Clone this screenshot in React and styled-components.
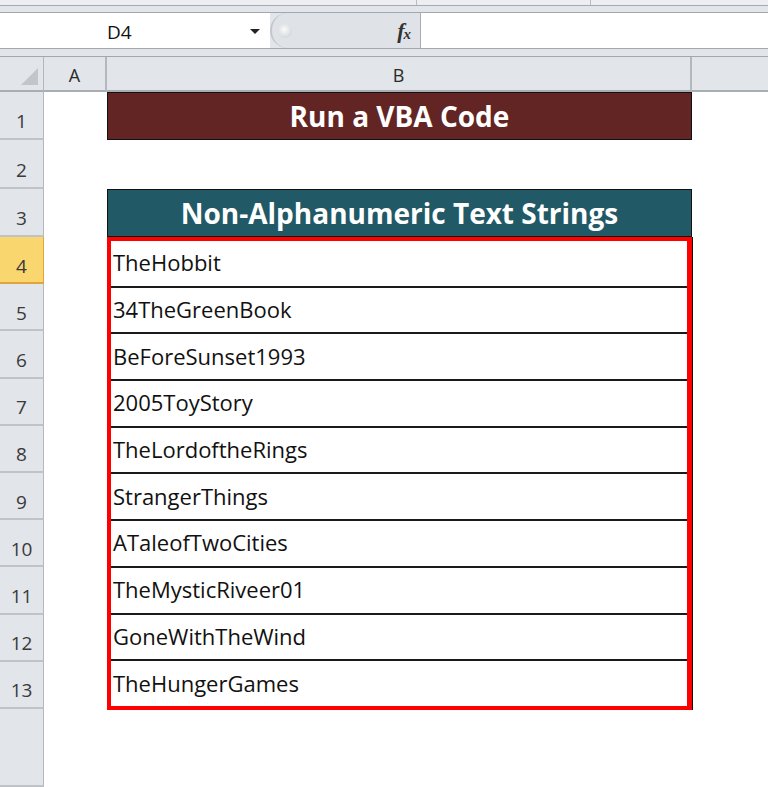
import React from 'react';
import styled, { createGlobalStyle } from 'styled-components';

const GlobalStyle = createGlobalStyle`
  html, body {
    margin: 0;
    padding: 0;
    background: #ffffff;
    overflow: hidden;
  }
  body {
    font-family: "Open Sans", "Noto Sans", sans-serif;
  }
`;

const Window = styled.div`
  width: 768px;
  height: 787px;
  display: flex;
  flex-direction: column;
  overflow: hidden;
  background: #ffffff;
`;

const TopStrip = styled.div`
  height: 5px;
  display: grid;
  grid-template-columns: 416px 174px 1fr;
  background: #eceef1;
  border-bottom: 1px solid #a6abb2;
`;

const StripCell = styled.div`
  border-left: ${(p) => (p.first ? 'none' : '1px solid #b9bdc3')};
`;

const Band = styled.div`
  height: ${(p) => p.h}px;
  background: #e2e5e9;
  border-bottom: 1px solid #a3a8ae;
`;

const FormulaRow = styled.div`
  height: 35px;
  display: flex;
  border-bottom: 1px solid #a3a8ae;
  background: #e2e5e9;
`;

const NameBox = styled.div`
  width: 270px;
  background: #ffffff;
  position: relative;
  display: flex;
  align-items: center;
  font-size: 19px;
  color: #111;
  padding-left: 107px;
  padding-top: 2px;
  box-sizing: border-box;
`;

const DropArrow = styled.div`
  position: absolute;
  left: 250px;
  top: 16px;
  width: 0;
  height: 0;
  border-left: 5px solid transparent;
  border-right: 5px solid transparent;
  border-top: 5px solid #222;
`;

const Pill = styled.div`
  width: 151px;
  display: flex;
  align-items: center;
  justify-content: space-between;
  background: #dfe2e7;
  border-left: 2px solid #c3c7cc;
  border-radius: 18px 0 0 18px;
  padding: 0 10px 0 6px;
  box-sizing: border-box;
  border-right: 1px solid #a9adb3;
`;

const Grip = styled.div`
  width: 14px;
  height: 14px;
  border-radius: 50%;
  background: radial-gradient(circle at 45% 40%, #fafafa, #c9ccd0);
`;

const Fx = styled.span`
  font-family: "Liberation Serif", serif;
  font-style: italic;
  font-weight: bold;
  font-size: 22px;
  color: #333;
  letter-spacing: -1px;
  sub {
    font-size: 15px;
    vertical-align: -1px;
  }
`;

const FormulaInput = styled.div`
  flex: 1;
  background: #ffffff;
`;

const Sheet = styled.div`
  flex: 1;
  display: grid;
  grid-template-columns: 44px 63px 585px 1fr;
  grid-template-rows: 35px 48px 49px 48px repeat(10, 47.2px) 1fr;
  background: #ffffff;
`;

const Corner = styled.div`
  background: #e2e5e9;
  border-right: 1px solid #b4b8be;
  border-bottom: 2px solid #a9aeb4;
  position: relative;
  &::after {
    content: '';
    position: absolute;
    right: 5px;
    bottom: 5px;
    width: 0;
    height: 0;
    border-left: 17px solid transparent;
    border-bottom: 17px solid #c2c6cb;
  }
`;

const ColHead = styled.div`
  background: #e2e5e9;
  border-right: ${(p) => (p.last ? 'none' : '2px solid #b4b8be')};
  border-bottom: 2px solid #a9aeb4;
  display: flex;
  align-items: center;
  justify-content: center;
  padding-top: 3px;
  box-sizing: border-box;
  font-size: 18px;
  color: #2a2a2a;
`;

const RowHead = styled.div`
  grid-column: 1;
  background: ${(p) => (p.active ? '#f9d66e' : '#e2e5e9')};
  border-right: 1px solid ${(p) => (p.active ? '#e2a43a' : '#b4b8be')};
  border-bottom: 2px solid ${(p) => (p.active ? '#e2a43a' : '#bfc3c8')};
  display: flex;
  align-items: center;
  justify-content: center;
  padding-top: 12px;
  box-sizing: border-box;
  font-size: 19px;
  color: #3a3a3a;
`;

const Banner = styled.div`
  grid-column: 3;
  grid-row: ${(p) => p.row};
  background: ${(p) => p.bg};
  border: 1px solid #111;
  display: flex;
  align-items: center;
  justify-content: center;
  color: #ffffff;
  font-weight: 700;
  font-size: 28px;
  box-sizing: border-box;
`;

const RedBox = styled.div`
  grid-column: 3;
  grid-row: 5 / 15;
  border: 4px solid #ff0000;
  border-right-width: 5px;
  box-shadow: 1px 0 0 #111;
  display: flex;
  flex-direction: column;
  margin-bottom: -1px;
`;

const DataCell = styled.div`
  flex: 1;
  display: flex;
  align-items: center;
  padding-left: 2px;
  padding-bottom: 2px;
  box-sizing: border-box;
  border-bottom: ${(p) => (p.last ? 'none' : '2px solid #1a1a1a')};
  font-size: 22px;
  color: #111;
`;

const titles = [
  'TheHobbit',
  '34TheGreenBook',
  'BeForeSunset1993',
  '2005ToyStory',
  'TheLordoftheRings',
  'StrangerThings',
  'ATaleofTwoCities',
  'TheMysticRiveer01',
  'GoneWithTheWind',
  'TheHungerGames',
];

export default function App() {
  const rows = Array.from({ length: 13 }, (_, i) => i + 1);
  return (
    <Window>
      <GlobalStyle />
      <TopStrip>
        <StripCell first />
        <StripCell />
        <StripCell />
      </TopStrip>
      <Band h={6} />
      <FormulaRow>
        <NameBox>
          D4
          <DropArrow />
        </NameBox>
        <Pill>
          <Grip />
          <Fx>
            f<sub>x</sub>
          </Fx>
        </Pill>
        <FormulaInput />
      </FormulaRow>
      <Band h={7} />
      <Sheet>
        <Corner />
        <ColHead>A</ColHead>
        <ColHead>B</ColHead>
        <ColHead last />
        {rows.map((r) => (
          <RowHead key={r} active={r === 4} style={{ gridRow: r + 1 }}>
            {r}
          </RowHead>
        ))}
        <RowHead style={{ gridRow: 15 }} />
        <Banner row={2} bg="#632523">
          Run a VBA Code
        </Banner>
        <Banner row={4} bg="#215967">
          Non-Alphanumeric Text Strings
        </Banner>
        <RedBox>
          {titles.map((t, i) => (
            <DataCell key={t} last={i === titles.length - 1}>
              {t}
            </DataCell>
          ))}
        </RedBox>
      </Sheet>
    </Window>
  );
}
